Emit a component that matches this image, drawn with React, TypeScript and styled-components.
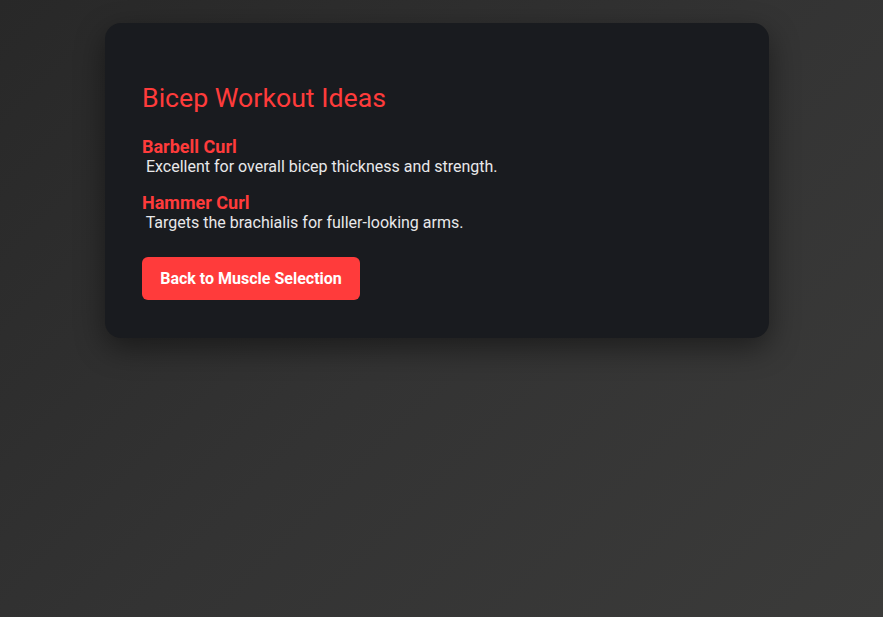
import React from "react";
import styled, { createGlobalStyle } from "styled-components";

const Global = createGlobalStyle`
  html, body { margin: 0; padding: 0; height: 100%; }
  body {
    font-family: Roboto, "Noto Sans", sans-serif;
    background: linear-gradient(135deg, #282828 0%, #333333 50%, #3b3b3a 100%);
    min-height: 617px;
  }
`;

const Page = styled.div`
  padding: 23px 0 0 105px;
`;

const Card = styled.div`
  width: 664px;
  box-sizing: border-box;
  background: #191b1f;
  border-radius: 16px;
  padding: 36px 37px 38px;
  box-shadow: 0 10px 30px rgba(0, 0, 0, 0.45);
`;

const Title = styled.h2`
  margin: 24px 0 24px;
  font-size: 26.7px;
  font-weight: 400;
  line-height: 30px;
  color: #ff3b3b;
`;

const Item = styled.div`
  margin-bottom: 16px;
  line-height: 20px;
`;

const Name = styled.strong`
  display: block;
  font-size: 18px;
  font-weight: 700;
  color: #ff3b3b;
`;

const Desc = styled.span`
  font-size: 16px;
  color: #e8e8ea;
  white-space: pre;
`;

const Button = styled.button`
  display: block;
  margin-top: 24px;
  height: 43px;
  width: 218px;
  border: none;
  border-radius: 6px;
  background: #ff3b3b;
  color: #fff;
  font-family: Roboto, sans-serif;
  font-weight: 700;
  font-size: 16px;
  cursor: pointer;
`;

const items = [
  { name: "Barbell Curl", desc: "Excellent for overall bicep thickness and strength." },
  { name: "Hammer Curl", desc: "Targets the brachialis for fuller-looking arms." },
];

export default function App() {
  return (
    <>
      <Global />
      <Page>
        <Card>
          <Title>Bicep Workout Ideas</Title>
          {items.map((it) => (
            <Item key={it.name}>
              <Name>{it.name}</Name>
              <Desc> {it.desc}</Desc>
            </Item>
          ))}
          <Button>Back to Muscle Selection</Button>
        </Card>
      </Page>
    </>
  );
}
